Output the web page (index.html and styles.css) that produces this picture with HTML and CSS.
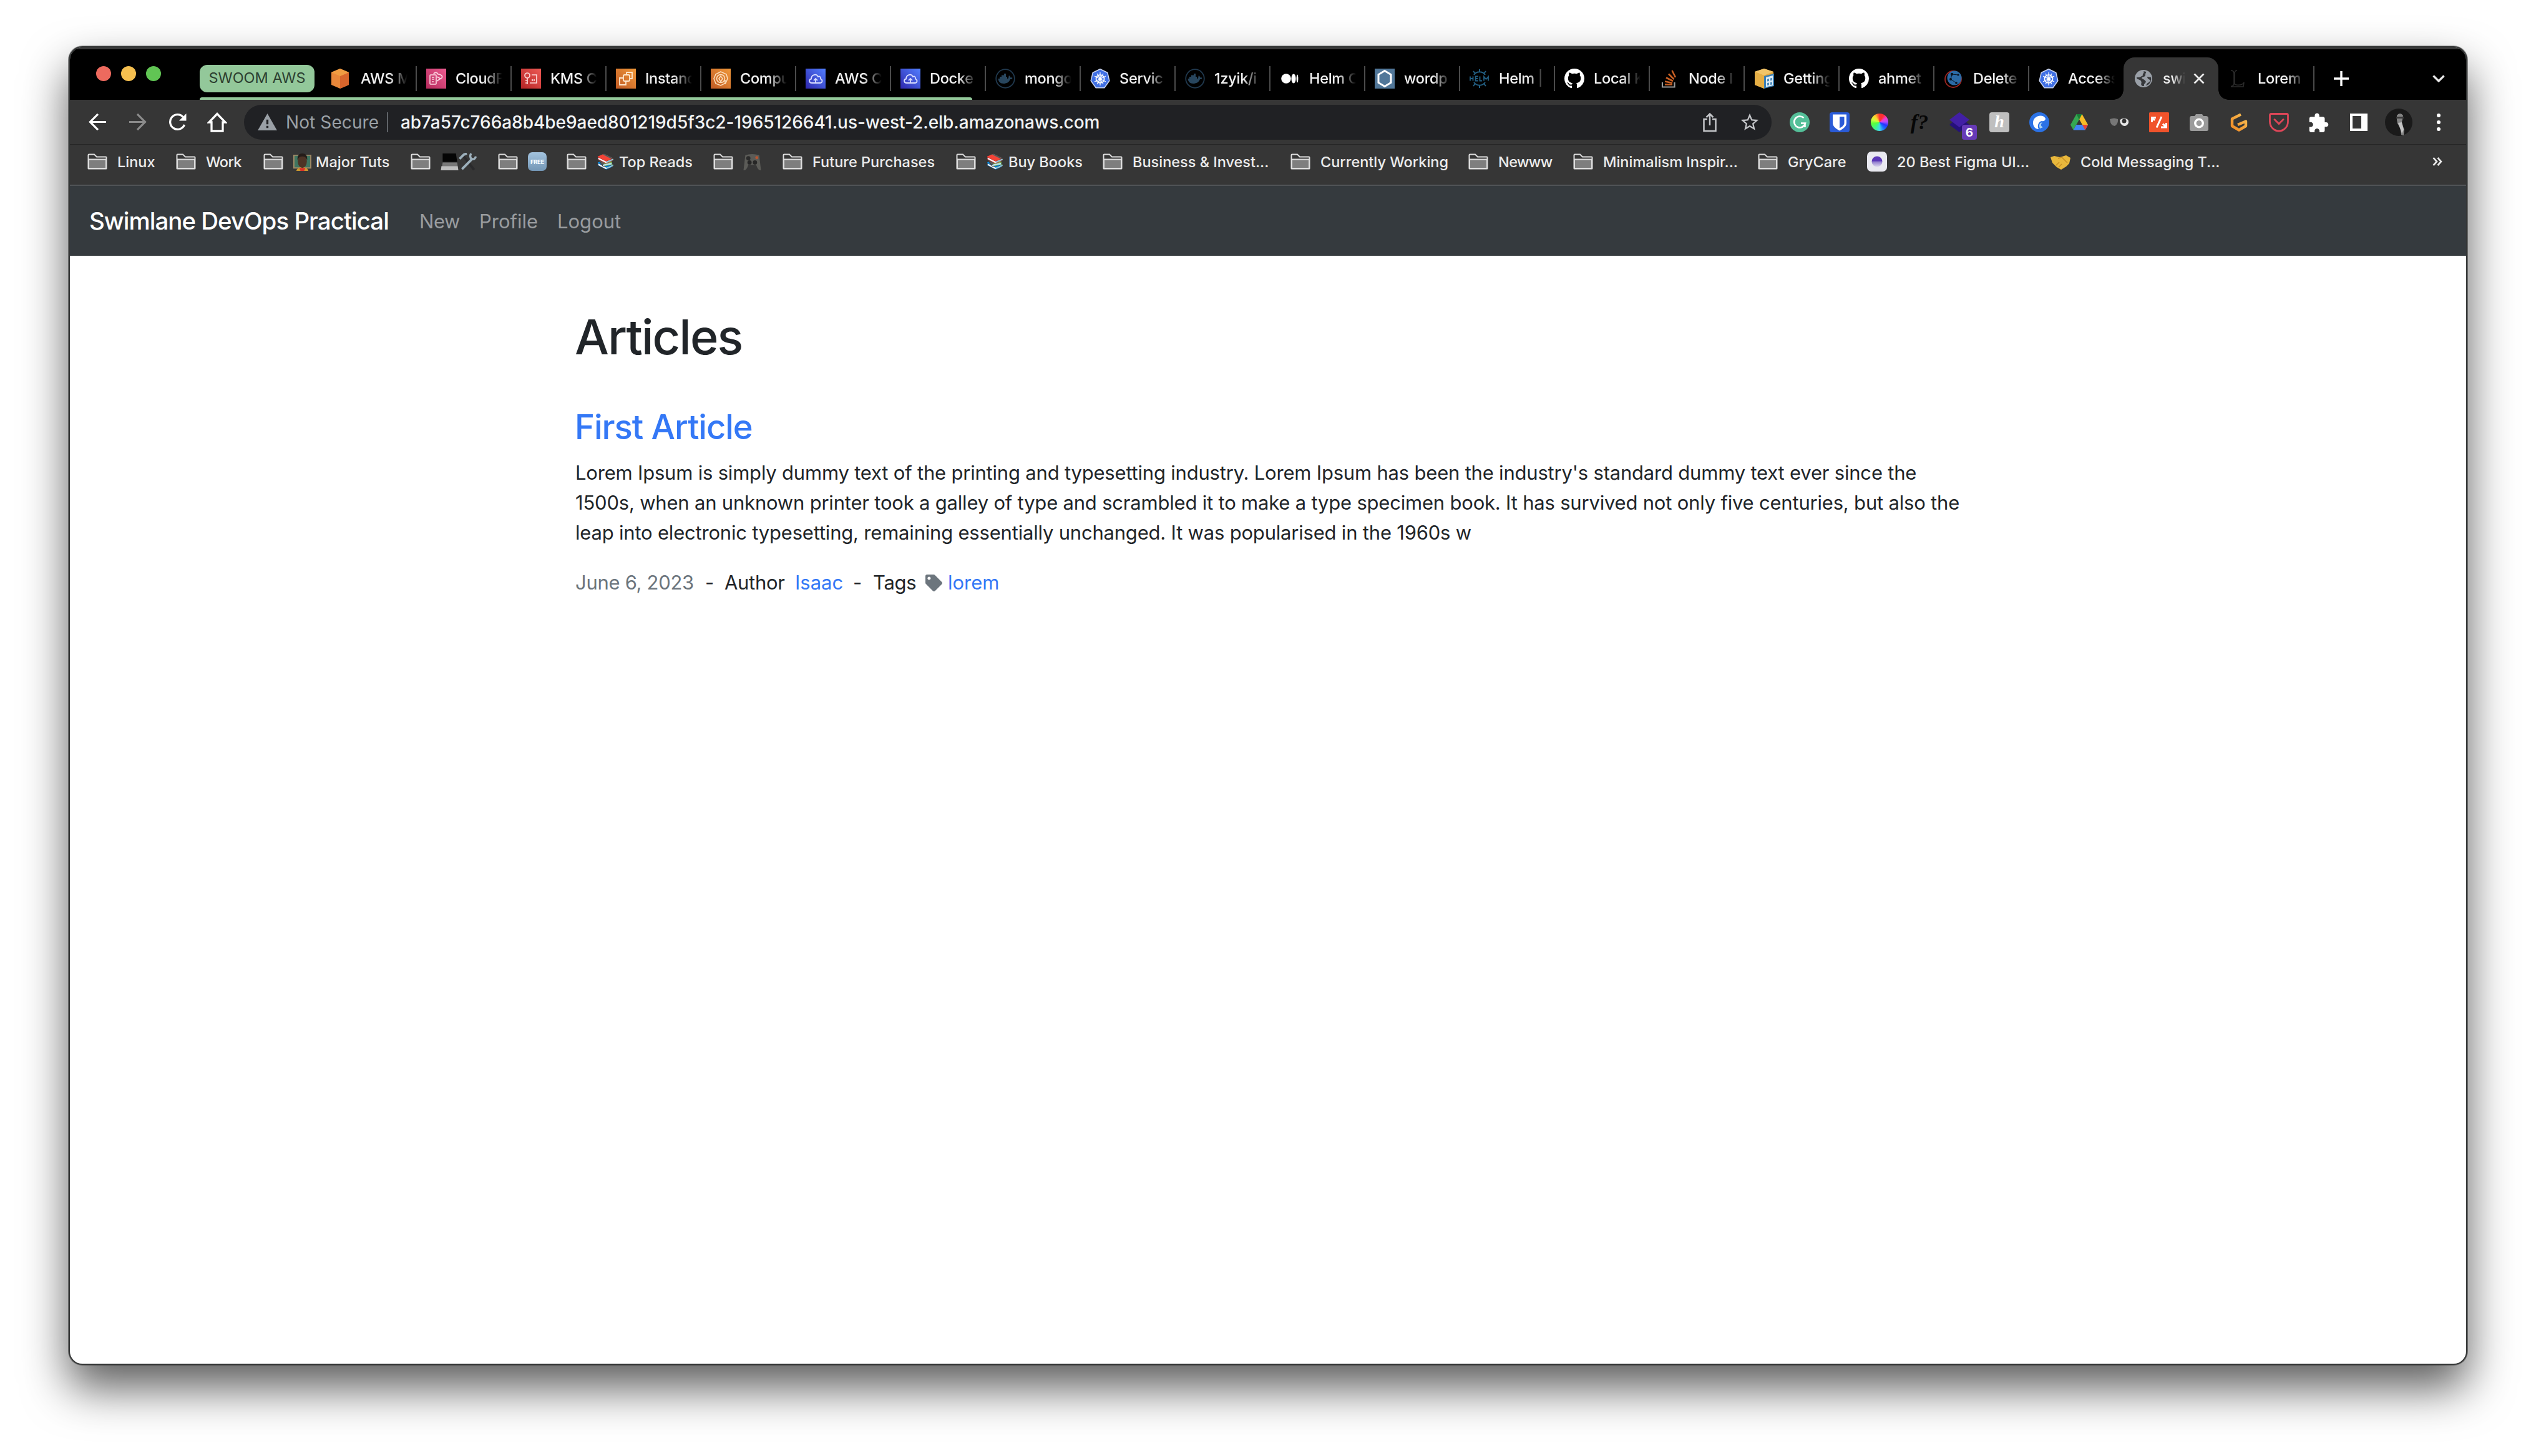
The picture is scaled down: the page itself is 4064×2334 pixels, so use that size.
FILE: index.html
```
<!DOCTYPE html>
<html lang="en">
<head>
<meta charset="utf-8">
<title>Articles</title>
<link rel="stylesheet" href="styles.css">
</head>
<body>
<svg class="sprite" aria-hidden="true">
  <defs>
    <linearGradient id="g-orange" x1="0" y1="1" x2="1" y2="0"><stop offset="0" stop-color="#c05a24"/><stop offset="1" stop-color="#f0983a"/></linearGradient>
    <linearGradient id="g-pink" x1="0" y1="1" x2="1" y2="0"><stop offset="0" stop-color="#b52a5c"/><stop offset="1" stop-color="#ec5b90"/></linearGradient>
    <linearGradient id="g-red" x1="0" y1="1" x2="1" y2="0"><stop offset="0" stop-color="#b32425"/><stop offset="1" stop-color="#ee5a55"/></linearGradient>
    <linearGradient id="g-blue" x1="0" y1="1" x2="1" y2="0"><stop offset="0" stop-color="#2e27ad"/><stop offset="1" stop-color="#527fff"/></linearGradient>
    <linearGradient id="g-figma" x1="0" y1="0" x2="0" y2="1"><stop offset=".45" stop-color="#5b38b8"/><stop offset=".5" stop-color="#8d78cd"/><stop offset="1" stop-color="#dcd8ee"/></linearGradient>
    <linearGradient id="g-g2" x1="0" y1="1" x2="1" y2="0"><stop offset="0" stop-color="#f08a24"/><stop offset="1" stop-color="#f7bf55"/></linearGradient>
  </defs>
  <symbol id="folder" viewBox="0 0 32 26"><path d="M1.500 24V2.500Q1.500 1.500 2.500 1.500H11L15 5.500H29.500Q30.500 5.500 30.500 6.500V24Q30.500 24.500 30 24.500H2Q1.500 24.500 1.500 24Z" fill="#363636" stroke="#dcdcdc" stroke-width="2"/><path d="M2 9.500H30V24H2Z" fill="#7e7e7e" stroke="#dcdcdc" stroke-width="2"/></symbol>
  <symbol id="awsbox" viewBox="0 0 32 32"><path d="M14 0 28 6V26L14 32 0 26V6Z" fill="#e8873a"/><path d="M14 12 28 6V26L14 32Z" fill="#d9662c"/><path d="M14 0 28 6 14 12 0 6Z" fill="#f09c42"/></symbol>
  <symbol id="cloudfront" viewBox="0 0 32 32"><path d="M0 0H32V32H0Z" fill="url(#g-pink)"/><g fill="none" stroke="#fbd3e0" stroke-width="1.600"><rect x="6" y="10" width="10" height="15" rx="1"/><path d="M9 14h4M9 17h4M9 21h3M12 9C13 5 18 6 19 9 24 9 27 12 25 15L20 18M17 13l6 3-6 4"/></g></symbol>
  <symbol id="kms" viewBox="0 0 32 32"><path d="M0 0H32V32H0Z" fill="url(#g-red)"/><g fill="none" stroke="#fbd6d6" stroke-width="1.700"><circle cx="10" cy="11" r="4"/><path d="M10 15V25M10 19H7M10 23H7M17 10h8V23H14M18 20v-3M21 20v-3"/></g></symbol>
  <symbol id="ec2" viewBox="0 0 32 32"><path d="M0 0H32V32H0Z" fill="url(#g-orange)"/><g fill="none" stroke="#fde6cb" stroke-width="1.800"><rect x="12" y="10" width="10" height="10" rx="2"/><path d="M17 10V6h9v10h-4M12 15H6v11h10v-6"/></g></symbol>
  <symbol id="compute" viewBox="0 0 32 32"><path d="M0 0H32V32H0Z" fill="url(#g-orange)"/><g fill="none" stroke="#fbdcb9" stroke-width="1.600"><path d="M16 5 25 9 27 16 24 23 16 27 8 24 5 16 8 9Z"/><circle cx="16" cy="16" r="6.500"/><path d="M16 12l-3 4 3 5 3-5zM23 18v7"/></g></symbol>
  <symbol id="awscloud" viewBox="0 0 32 32"><path d="M0 0H32V32H0Z" fill="url(#g-blue)"/><g fill="none" stroke="#d7dcff" stroke-width="1.800"><path d="M10 23C5 23 5 17 9 16.500 9 10 17 7 20 13 23 11.500 24.500 14 24 16.500 28 18 27 23 23 23Z"/><path d="M16 23V16M13 19l3-3 3 3"/></g></symbol>
  <symbol id="docker" viewBox="0 0 32 32"><circle cx="16" cy="16" r="14.800" fill="none" stroke="#20394e" stroke-width="1.800"/><path d="M4.500 16H20.500C22 14 21 12 22 11 24 12 24 14 24.500 14.500 26 14 27.500 15 27.500 15 27 17 25 17 24 17 22 22 18 24 13 24 8 24 5 21 4.500 16ZM7 13h12v3H7ZM10 10.500h7v3h-7ZM14 8h3v3h-3Z" fill="#28465e"/></symbol>
  <symbol id="k8s" viewBox="0 0 32 32"><path d="M16 .8 27.800 6.500 30.800 19.500 22.800 30.800H9.200L1.200 19.500 4.200 6.500Z" fill="#3f6fe4" stroke="#c8d3ee" stroke-width="1.500" stroke-linejoin="round"/><g fill="none" stroke="#fff" stroke-width="1.700"><circle cx="16" cy="16.500" r="6.500"/><path d="M16 6V27M7 12 25 21M25 12 7 21M11 25 21 8M21 25 11 8" stroke-width="1.200"/></g><circle cx="16" cy="16.500" r="2" fill="#fff"/></symbol>
  <symbol id="medium" viewBox="0 0 32 32"><circle cx="10" cy="16" r="7.800" fill="#fff"/><ellipse cx="22" cy="16" rx="3.600" ry="7.400" fill="#fff"/><ellipse cx="28" cy="16" rx="1.400" ry="6.500" fill="#fff"/></symbol>
  <symbol id="hexa" viewBox="0 0 32 32"><path d="M0 0H32V32H0Z" fill="#517799"/><path d="M16 3.500 26 9.500V22.500L16 28.500 6 22.500V9.500Z" fill="none" stroke="#fff" stroke-width="3"/></symbol>
  <symbol id="helm" viewBox="0 0 32 32"><g fill="none" stroke="#225f83" stroke-width="2"><path d="M7 10A11 11 0 0 1 25 10M7 22A11 11 0 0 0 25 22M16 1v5M6 4l3 4M26 4l-3 4M16 31v-5M6 28l3-4M26 28l-3-4"/><path d="M1 12.500v7M1 16H5M5.500 12.500v7M14 12.500H9.500v7H14M9.500 16H13M16.500 12.500v7H20M23 19.500V13l3.500 4L30 13v6.500" stroke-width="1.800"/></g></symbol>
  <symbol id="github" viewBox="0 0 16 16"><path fill="#fff" d="M8 0C3.580 0 0 3.580 0 8c0 3.540 2.290 6.530 5.470 7.590.4.070.55-.17.55-.38 0-.19-.01-.82-.01-1.490-2.010.37-2.530-.49-2.690-.94-.09-.23-.48-.94-.82-1.130-.28-.15-.68-.52-.01-.53.63-.01 1.080.58 1.230.82.72 1.210 1.870.87 2.330.66.07-.52.28-.87.51-1.070-1.780-.2-3.640-.89-3.640-3.950 0-.87.31-1.590.82-2.150-.08-.2-.36-1.020.08-2.120 0 0 .67-.21 2.200.82.64-.18 1.320-.27 2-.27s1.360.09 2 .27c1.530-1.040 2.200-.82 2.200-.82.44 1.100.16 1.920.08 2.120.51.56.82 1.270.82 2.150 0 3.070-1.870 3.750-3.650 3.950.29.25.54.73.54 1.480 0 1.070-.01 1.930-.01 2.200 0 .21.15.46.55.38A8.010 8.010 0 0 0 16 8c0-4.420-3.580-8-8-8z"/></symbol>
  <symbol id="stack" viewBox="0 0 32 32"><path d="M5 22V29.500H24.500V22" fill="none" stroke="#9a9a9a" stroke-width="2.200"/><path d="M9 25.500H21M9 20.500 21 23M11 14.500 22 20M15 8.500 23.500 17M20.500 3 26 14" stroke="#c85f23" stroke-width="2.600" fill="none"/></symbol>
  <symbol id="getting" viewBox="0 0 32 32"><path d="M16 0 31 5V25L16 32 1 26V5Z" fill="#e2a63b"/><path d="M16 0 31 5 16 11 1 5Z" fill="#f2c468"/><path d="M16 11 1 5V26L16 32Z" fill="#e5ae45"/><path d="M16 12 32 8V28L16 32Z" fill="#3c7fb4"/><path d="M19 14 30 11V27L19 29.500Z" fill="#dcebf5"/><path d="M21 17l3-1v4l-3 .6zM26 15.500l3-.8v4l-3 .6zM21 23l3-.6v4l-3 .6zM26 22l3-.6v4l-3 .6z" fill="#4d8dbe"/></symbol>
  <symbol id="globe2" viewBox="0 0 32 32"><circle cx="15" cy="17" r="13" fill="none" stroke="#9c2622" stroke-width="1.800"/><circle cx="17" cy="15" r="11.500" fill="#2c6aa6"/><g fill="#081320"><circle cx="13" cy="9" r="2.200"/><circle cx="11" cy="17" r="2"/><circle cx="23" cy="10" r="1.600"/><circle cx="20" cy="23" r="1.800"/></g><path d="M13 9 11 17 20 23M13 9 23 10" fill="none" stroke="#081320" stroke-width="1"/></symbol>
  <symbol id="world" viewBox="0 0 32 32"><circle cx="16" cy="16" r="14" fill="#9aa0a8"/><path d="M16 4C18 7 14 8 15 11 12 12 11 14 8 14 6 14 5 13 5 15 6 18 11 17 12 20 14 23 11 24 13 27 14 28 15 28 17 28 16 24 19 24 20 21 18 17 14 17 13 15 15 12 19 14 19 10 19 7 21 6 20 5Z" fill="#36383b"/><path d="M22 13C22 17 26 17 27 19 25 23 22 22 20 27 26 26 29 20 28 14Z" fill="#36383b"/></symbol>
  <symbol id="lorem" viewBox="0 0 32 32"><path d="M4 3C8 3 9 5 9 8V24C9 27 7 28 4 28.500M14 3C11 3 10 5 10 8V24C10 27 22 28 25 22L24 29H4" fill="none" stroke="#2b2b2b" stroke-width="1.600"/></symbol>
</svg>

<div class="window">
  <div class="tabstrip">
    <div class="lights"><i class="red"></i><i class="yellow"></i><i class="green"></i></div>
    <div class="group">
      <span class="pill">SWOOM AWS</span>
      <div class="tab first"><svg><use href="#awsbox"/></svg><span>AWS M</span></div>
      <div class="tab"><svg><use href="#cloudfront"/></svg><span>CloudF</span></div>
      <div class="tab"><svg><use href="#kms"/></svg><span>KMS C</span></div>
      <div class="tab"><svg><use href="#ec2"/></svg><span>Instanc</span></div>
      <div class="tab"><svg><use href="#compute"/></svg><span>Compu</span></div>
      <div class="tab"><svg><use href="#awscloud"/></svg><span>AWS C</span></div>
      <div class="tab"><svg><use href="#awscloud"/></svg><span>Docke</span></div>
    </div>
    <div class="tab"><svg><use href="#docker"/></svg><span>mongo</span></div>
    <div class="tab"><svg><use href="#k8s"/></svg><span>Servic</span></div>
    <div class="tab"><svg><use href="#docker"/></svg><span>1zyik/i</span></div>
    <div class="tab"><svg><use href="#medium"/></svg><span>Helm C</span></div>
    <div class="tab"><svg><use href="#hexa"/></svg><span>wordp</span></div>
    <div class="tab"><svg><use href="#helm"/></svg><span>Helm |</span></div>
    <div class="tab"><svg><use href="#github"/></svg><span>Local K</span></div>
    <div class="tab"><svg><use href="#stack"/></svg><span>Node I</span></div>
    <div class="tab"><svg><use href="#getting"/></svg><span>Getting</span></div>
    <div class="tab"><svg><use href="#github"/></svg><span>ahmet</span></div>
    <div class="tab"><svg><use href="#globe2"/></svg><span>Delete</span></div>
    <div class="tab"><svg><use href="#k8s"/></svg><span>Access</span></div>
    <div class="tab active"><svg><use href="#world"/></svg><span>swi</span>
      <svg class="close" viewBox="0 0 18 18"><path d="M1.500 1.500 16.500 16.500M16.500 1.500 1.500 16.500" stroke="#e8e8e8" stroke-width="2.800"/></svg></div>
    <div class="tab first"><svg><use href="#lorem"/></svg><span>Lorem</span></div>
    <div class="newtab"><svg viewBox="0 0 24 24"><path d="M12 0V24M0 12H24" stroke="#fff" stroke-width="3.400"/></svg></div>
    <svg class="chev" viewBox="0 0 20 12"><path d="M1.500 1.500 10 10 18.500 1.500" fill="none" stroke="#e8e8e8" stroke-width="3.200"/></svg>
  </div>

  <div class="toolbar">
    <div class="btn"><svg viewBox="0 0 30 30"><path d="M29 15H3M15.500 2 2.500 15 15.500 28" fill="none" stroke="#fff" stroke-width="3.300"/></svg></div>
    <div class="btn"><svg viewBox="0 0 30 30"><path d="M1 15H27M14.500 2 27.500 15 14.500 28" fill="none" stroke="#8b8b8b" stroke-width="3.300"/></svg></div>
    <div class="btn"><svg viewBox="0 0 30 30"><path d="M26.500 19.500A12.300 12.300 0 1 1 24 6.500" fill="none" stroke="#fff" stroke-width="3.400"/><path d="M29.500 1V13H17.500Z" fill="#fff"/></svg></div>
    <div class="btn"><svg class="home" viewBox="0 0 32 32"><path d="M16 2.500 3 16H7V30H25V16H29Z" fill="none" stroke="#fff" stroke-width="3.300"/></svg></div>
    <div class="omnibox">
      <svg class="warn" viewBox="0 0 32 28"><path d="M16 0 32 28H0Z" fill="#9aa0a6"/><path d="M14.300 10h3.400v8h-3.400zM14.300 20.500h3.400v3.500h-3.400z" fill="#202124"/></svg>
      <span class="notsecure">Not Secure</span>
      <i class="divider"></i>
      <span class="url">ab7a57c766a8b4be9aed801219d5f3c2-1965126641.us-west-2.elb.amazonaws.com</span>
      <svg class="share" viewBox="0 0 24 32"><path d="M8 11H2.500V30H21.500V11H16M12 21V3M6.500 8 12 2.500 17.500 8" fill="none" stroke="#c3c5c8" stroke-width="2.500"/></svg>
      <svg class="star" viewBox="0 0 24 24"><path fill="#c3c5c8" d="M22 9.240l-7.190-.62L12 2 9.190 8.630 2 9.240l5.460 4.730L5.820 21 12 17.270 18.180 21l-1.630-7.030L22 9.240zM12 15.400l-3.760 2.270 1-4.280-3.320-2.880 4.380-.38L12 6.100l1.710 4.040 4.380.38-3.320 2.880 1 4.280L12 15.400z"/></svg>
    </div>
    <div class="btn"><svg viewBox="0 0 32 32"><circle cx="16" cy="16" r="16" fill="#54bf98"/><path d="M22.500 9A9 9 0 1 0 25 17.500H18M24.500 16.500V24" fill="none" stroke="#fff" stroke-width="2.600"/></svg></div>
    <div class="btn"><svg viewBox="0 0 32 32"><rect width="32" height="32" rx="4" fill="#2a5bd7"/><path d="M5 3.500H27V17C27 23 21 27 16 29.500 11 27 5 23 5 17Z" fill="#fff"/><path d="M16 7H23.500V17C23.500 21 19 24 16 25.500Z" fill="#2a5bd7"/></svg></div>
    <div class="btn"><div class="wheel"></div></div>
    <div class="btn"><span class="fx">f?</span></div>
    <div class="btn badge-wrap"><svg viewBox="0 0 32 32"><path d="M16 7 32 20 16 32 0 20Z" fill="#25107a"/><path d="M16 0 32 12 16 24 0 12Z" fill="#421fa5"/></svg><b class="badge">6</b></div>
    <div class="btn"><div class="honey">h</div></div>
    <div class="btn"><svg viewBox="0 0 32 32"><circle cx="16" cy="16" r="16" fill="#2b72e6"/><path d="M26 10C22 2 6 5 6 17 6 23 10 27 15 27 12 21 15 15 20 14 23 15 26 13 26 10Z" fill="#fff"/><path d="M17 26C14 20 18 15 21 17 17 19 19 23 22 24Z" fill="#a9d3f5"/></svg></div>
    <div class="btn"><svg class="s28" viewBox="0 0 28 26"><path d="M9.500 0H18.500L28 17H19Z" fill="#f6bd27"/><path d="M9.500 0 14 8.500 4.700 25.500 0 17Z" fill="#34a853"/><path d="M9.300 17H28L23.500 25.500H4.700Z" fill="#4285f4"/><path d="M19 17H28L23.500 25.500Z" fill="#ea4335"/><path d="M9.500 0H18.500L14 8.500Z" fill="#188038"/></svg></div>
    <div class="btn"><svg viewBox="0 0 32 32"><path d="M1 11Q8 8 14 11 15 18 9 22 2 22 1 11Z" fill="#777"/><path d="M17 13Q20 9 26 10 32 11 31 17 29 22 24 22 18 21 17 13Z" fill="#e6e6e6"/><circle cx="24" cy="14" r="3.500" fill="#333"/></svg></div>
    <div class="btn"><svg viewBox="0 0 32 32"><rect width="32" height="32" rx="1.500" fill="#f0532b"/><path d="M12 24.500 20 7M4.500 15.500V8.500H11M5 9 9 13M27.500 17V24H19M27 23.500 22 18.500" fill="none" stroke="#fff" stroke-width="3"/></svg></div>
    <div class="btn"><svg viewBox="0 0 32 32"><path d="M1 10Q1 6 4 6H9L11 3H21L23 6H27Q31 6 31 10V27Q31 30 28 30H4Q1 30 1 27Z" fill="#9b9b9b"/><circle cx="16" cy="17.500" r="6.200" fill="#9b9b9b" stroke="#fff" stroke-width="3.500"/></svg></div>
    <div class="btn"><svg viewBox="0 0 32 32"><path d="M19 3.500 5 10.500V22L16 28.500 27 22V14.500L14 20" fill="none" stroke="url(#g-g2)" stroke-width="4.400" stroke-linejoin="round"/></svg></div>
    <div class="btn"><svg viewBox="0 0 32 32"><path d="M1.500 4.500Q1.500 2.500 3.500 2.500H28.500Q30.500 2.500 30.500 4.500V15C30.500 24 23 30 16 30 9 30 1.500 24 1.500 15ZM9 11.500 16 18.500 23 11.500" fill="none" stroke="#dd4658" stroke-width="2.800" stroke-linecap="round"/></svg></div>
    <div class="btn"><svg viewBox="1.500 0 22 22"><path fill="#fff" d="M20.500 11H19V7c0-1.100-.9-2-2-2h-4V3.500C13 2.120 11.880 1 10.500 1S8 2.120 8 3.500V5H4c-1.100 0-1.990.9-1.990 2v3.800H3.500c1.490 0 2.700 1.210 2.700 2.700s-1.210 2.700-2.700 2.700H2V20c0 1.100.9 2 2 2h3.800v-1.500c0-1.490 1.210-2.700 2.700-2.700 1.490 0 2.700 1.210 2.700 2.700V22H17c1.100 0 2-.9 2-2v-4h1.500c1.380 0 2.500-1.120 2.500-2.500S21.880 11 20.500 11z"/></svg></div>
    <div class="btn"><svg class="s28" viewBox="0 0 28 28"><path d="M0 0H28V28H0ZM4 4V24H18V4Z" fill="#fff" fill-rule="evenodd"/></svg></div>
    <div class="btn"><svg class="avatar" viewBox="0 0 44 44"><circle cx="22" cy="22" r="22" fill="#1a1a1a"/><path d="M19 11Q24 5 29 11L28 18Q26 23 28 26L31 34 30 43 26 42 25 32 20 24 19 18Z" fill="#858585"/><path d="M18 13H30V16H18Z" fill="#3a3a3a"/><path d="M21 23 27 22 30 34 27 40Z" fill="#c4c4c4"/></svg></div>
    <div class="btn"><svg viewBox="0 0 32 32"><g fill="#fff"><circle cx="16" cy="5" r="3"/><circle cx="16" cy="16" r="3"/><circle cx="16" cy="27" r="3"/></g></svg></div>
  </div>

  <div class="bookmarks">
    <div class="bm"><svg><use href="#folder"/></svg><span>Linux</span></div>
    <div class="bm"><svg><use href="#folder"/></svg><span class="tight">Work</span></div>
    <div class="bm"><svg><use href="#folder"/></svg><svg class="pic wide" viewBox="0 0 30 30"><path d="M1 4H29V25H1Z" fill="#3f7560" stroke="#a08a66" stroke-width="2"/><path d="M5 30Q6 24 15 24 24 24 25 30Z" fill="#c9962f"/><path d="M10 25H20L18 30H12Z" fill="#d8322a"/><ellipse cx="15" cy="14" rx="7.500" ry="11" fill="#4d3426"/><path d="M7 12Q6 1 15 1 24 1 23 12 21 6 15 6 9 6 7 12Z" fill="#241c19"/></svg><span>Major Tuts</span></div>
    <div class="bm"><svg><use href="#folder"/></svg><svg class="pic" viewBox="0 0 29 30"><path d="M3 1H25L27 15H3Z" fill="#050505"/><path d="M3 16H27L28 22H2Z" fill="#777"/><path d="M1 22H28L29 29H0Z" fill="#bdbdbd"/></svg><svg class="pic" viewBox="0 0 29 30"><path d="M8 6 25 28" stroke="#2a2a2c" stroke-width="4"/><path d="M1 10 8 3 13 1M22 10 5 27" fill="none" stroke="#9db0bc" stroke-width="4"/><path d="M20 1Q17 7 21 10 26 12 28 6" fill="none" stroke="#9db0bc" stroke-width="3.500"/></svg></div>
    <div class="bm"><svg><use href="#folder"/></svg><span class="free">FREE</span></div>
    <div class="bm"><svg><use href="#folder"/></svg><span class="emoji wide">📚</span><span>Top Reads</span></div>
    <div class="bm"><svg><use href="#folder"/></svg><svg class="pic" viewBox="0 0 29 30"><path d="M3 4Q14 0 26 4L29 29Q24 30 21 20H8Q5 30 0 29Z" fill="#5b5b57"/><circle cx="8" cy="9" r="3.500" fill="#2b2b2b"/><circle cx="10" cy="16" r="3.500" fill="#262626"/><circle cx="19" cy="16" r="3.500" fill="#262626"/><circle cx="22" cy="8" r="2.500" fill="#b8552f"/></svg></div>
    <div class="bm"><svg><use href="#folder"/></svg><span>Future Purchases</span></div>
    <div class="bm"><svg><use href="#folder"/></svg><span class="emoji wide">📚</span><span>Buy Books</span></div>
    <div class="bm"><svg><use href="#folder"/></svg><span>Business &amp; Invest...</span></div>
    <div class="bm"><svg><use href="#folder"/></svg><span>Currently Working</span></div>
    <div class="bm"><svg><use href="#folder"/></svg><span class="tight">Newww</span></div>
    <div class="bm"><svg><use href="#folder"/></svg><span>Minimalism Inspir...</span></div>
    <div class="bm"><svg><use href="#folder"/></svg><span>GryCare</span></div>
    <div class="bm"><svg class="fav" viewBox="0 0 32 32"><rect width="32" height="32" rx="7" fill="#e9e9f0"/><circle cx="16" cy="16" r="8.500" fill="url(#g-figma)"/></svg><span>20 Best Figma UI...</span></div>
    <div class="bm"><svg class="fav" viewBox="0 0 32 32"><path d="M0 9 6 7 15 9 25 6 32 10 30 19 25 24 17 29 10 25 3 18Z" fill="#e9b83c"/><path d="M12 11 18 9 27 18M9 22 14 17M13 25 18 20" fill="none" stroke="#c98f24" stroke-width="1.500"/></svg><span>Cold Messaging T...</span></div>
    <svg class="more" viewBox="0 0 16 14"><path d="M1.500 1 7 7 1.500 13M8.500 1 14 7 8.500 13" fill="none" stroke="#e8e8e8" stroke-width="2.600"/></svg>
  </div>

  <nav class="navbar">
    <a class="brand">Swimlane DevOps Practical</a>
    <a class="n-new">New</a><a class="n-profile">Profile</a><a>Logout</a>
  </nav>

  <main class="content">
    <h1>Articles</h1>
    <h2>First Article</h2>
    <p>Lorem Ipsum is simply dummy text of the printing and typesetting industry. Lorem Ipsum has been the industry's standard dummy text ever since the<br>1500s, when an unknown printer took a galley of type and scrambled it to make a type specimen book. It has survived not only five centuries, but also the<br>leap into electronic typesetting, remaining essentially unchanged. It was popularised in the 1960s w</p>
    <div class="meta">
      <span class="muted">June 6, 2023</span><span>-</span><span>Author</span><a>Isaac</a><span>-</span><span>Tags</span>
      <svg viewBox="0 0 512 512"><path fill="#6c757d" d="M0 252.118V48C0 21.490 21.490 0 48 0h204.118a48 48 0 0 1 33.941 14.059l211.883 211.883c18.745 18.745 18.745 49.137 0 67.882L293.823 497.941c-18.745 18.745-49.137 18.745-67.882 0L14.059 286.059A48 48 0 0 1 0 252.118zM112 64c-26.510 0-48 21.490-48 48s21.490 48 48 48 48-21.490 48-48-21.490-48-48-48z"/></svg>
      <a>lorem</a>
    </div>
  </main>
</div>
</body>
</html>
```
FILE: styles.css
```
* { box-sizing: border-box; }
html, body { margin: 0; height: 100%; }
body {
  padding: 74px 110px 146px;
  background: #fff;
  font-family: Inter, "Liberation Sans", sans-serif;
  overflow: hidden;
}
.sprite { position: absolute; width: 0; height: 0; }

.window {
  display: flex;
  flex-direction: column;
  height: 2114px;
  border: 2px solid #343636;
  border-radius: 22px;
  background: #fff;
  overflow: hidden;
  box-shadow: 0 0 0 1px rgba(0, 0, 0, .35), 0 37px 72px rgba(0, 0, 0, .64);
}

/* Tab strip */
.tabstrip {
  display: flex;
  align-items: center;
  flex: none;
  height: 84px;
  padding: 13px 34px 0 42px;
  border-top: 3px solid #3a3a3a;
  background: #000;
  color: #f1f1f1;
  font-size: 23.5px;
  font-weight: 500;
}
.lights { display: flex; gap: 16px; width: 166px; height: 24px; margin-top: -16px; }
.lights i { width: 24px; height: 24px; border-radius: 50%; }
.red { background: #ed6a5e; }
.yellow { background: #f5bf4f; }
.green { background: #61c554; }
.group { position: relative; display: flex; align-items: center; height: 68px; }
.group::after {
  content: "";
  position: absolute;
  left: 0;
  right: 21px;
  bottom: 0;
  height: 4px;
  border-radius: 4px 4px 0 0;
  background: #93c89a;
}
.pill {
  width: 184px;
  height: 44px;
  margin-right: 11px;
  border-radius: 12px;
  background: #93c89a;
  color: #2c3f31;
  font-weight: 400;
  line-height: 42px;
  text-align: center;
}
.tab {
  position: relative;
  display: flex;
  align-items: center;
  flex: none;
  width: 152px;
  height: 68px;
  padding-left: 15px;
}
.tab::before {
  content: "";
  width: 2px;
  height: 40px;
  margin: 0 15px 0 -16px;
  background: #4b4b4b;
}
.tab.first::before, .tab.active::before { background: transparent; }
.tab svg { width: 32px; height: 32px; flex: none; }
.tab span {
  width: 75px;
  margin: -2px 0 0 15px;
  overflow: hidden;
  white-space: nowrap;
  letter-spacing: -.3px;
  -webkit-mask-image: linear-gradient(90deg, #000 46px, transparent 75px);
  mask-image: linear-gradient(90deg, #000 46px, transparent 75px);
}
.tab.active {
  border-radius: 18px 18px 0 0;
  background: #363636;
}
.tab.active::after {
  content: "";
  position: absolute;
  left: -16px;
  right: -16px;
  bottom: 0;
  height: 16px;
  background:
    radial-gradient(circle at 0 0, transparent 15.500px, #363636 16px) left / 16px 16px no-repeat,
    radial-gradient(circle at 100% 0, transparent 15.500px, #363636 16px) right / 16px 16px no-repeat;
}
.tab.active span {
  width: 36px;
  -webkit-mask-image: linear-gradient(90deg, #000 16px, transparent 36px);
  mask-image: linear-gradient(90deg, #000 16px, transparent 36px);
}
.tab.active .close { width: 18px; height: 18px; margin-left: 13px; }
.newtab { display: flex; align-items: center; flex: 1; height: 40px; padding-left: 31px; border-left: 2px solid #4b4b4b; }
.newtab svg { width: 24px; height: 24px; }
.chev { width: 20px; height: 12px; }

/* Toolbar */
.toolbar {
  display: flex;
  align-items: center;
  flex: none;
  height: 72px;
  padding: 0 12px;
  border-bottom: 1px solid #252525;
  background: #363636;
}
.btn { display: flex; align-items: center; justify-content: center; flex: none; width: 64px; height: 64px; }
.btn svg { width: 32px; height: 32px; }
.btn .s28 { width: 28px; height: 28px; }
.btn .avatar { width: 44px; height: 44px; }
.btn:nth-child(-n+3) svg { width: 29px; height: 29px; }
.omnibox {
  display: flex;
  align-items: center;
  flex: 1;
  height: 56px;
  margin: 0 13px 0 11px;
  padding: 0 20px 0 22px;
  border-radius: 28px;
  background: #202124;
  font-size: 28px;
  white-space: nowrap;
}
.warn { width: 31px; height: 27px; }
.notsecure { width: 162px; margin-left: 14px; color: #9aa0a6; letter-spacing: .1px; }
.divider { width: 2px; height: 32px; background: #5f6368; }
.url { flex: 1; margin-left: 20px; color: #f1f3f4; font-weight: 500; letter-spacing: -.045px; }
.share { width: 24px; height: 32px; margin-right: 35px; }
.star { width: 34px; height: 34px; margin-right: -2px; }
.wheel {
  width: 28px;
  height: 28px;
  border-radius: 50%;
  background: conic-gradient(#ff3030 0 8%, #f03cd0 16%, #b04cff 24%, #2334ff 32%, #1a6dff 40%, #40d8e8 50%, #3df58a 60%, #5bff3a 72%, #c8ff40 80%, #ffd12e 90%, #ff3030);
}
.fx { color: #060606; font: italic bold 34px "Liberation Serif", serif; }
.badge-wrap { position: relative; }
.badge {
  position: absolute;
  right: 4px;
  bottom: 4px;
  width: 24px;
  height: 24px;
  border-radius: 4px;
  background: #673ab7;
  color: #fff;
  font-size: 19px;
  line-height: 26px;
  text-align: center;
}
.honey {
  width: 32px;
  height: 32px;
  border-radius: 4px;
  background: #bfbfbf;
  color: #fff;
  font: italic bold 28px/30px "Liberation Serif", serif;
  text-align: center;
}

/* Bookmarks bar */
.bookmarks {
  display: grid;
  grid-template-columns: 142px 140px 236px 140px 110px 235px 111px 278px 235px 301px 285px 168px 296px 175px 294px 1fr 16px;
  align-items: center;
  flex: none;
  height: 66px;
  padding: 0 38px 10px 28px;
  border-bottom: 2px solid #505356;
  background: #363636;
  color: #ebebeb;
  font-size: 23.5px;
  font-weight: 500;
  white-space: nowrap;
}
.bm { display: flex; align-items: center; height: 40px; }
.bm svg { width: 32px; height: 26px; margin-right: 16px; }
.bm .fav { height: 32px; }
.bm .pic { width: 29px; height: 29px; margin-right: 0; }
.bm .pic.wide { margin-right: 7px; }
.tight { letter-spacing: -.6px; }
.emoji { width: 29px; font-family: "Noto Color Emoji", sans-serif; font-size: 23.5px; line-height: 40px; }
.emoji.wide { width: 36px; }
.free {
  width: 30px;
  height: 30px;
  border-radius: 7px;
  background: linear-gradient(#a3c3de, #7396b5);
  color: #fff;
  font-size: 9.5px;
  font-weight: 700;
  line-height: 31px;
  text-align: center;
  letter-spacing: -.4px;
}
.more { width: 16px; height: 14px; }

/* Site navigation */
.navbar {
  display: flex;
  align-items: center;
  flex: none;
  height: 112px;
  padding-left: 31px;
  background: #353a3e;
  color: #999c9f;
  font-size: 31px;
  white-space: nowrap;
}
.brand { width: 529px; color: #fff; font-size: 38.5px; font-weight: 500; letter-spacing: -1px; }
.n-new { width: 96px; letter-spacing: -.4px; }
.n-profile { width: 125px; }

/* Article list */
.content { padding: 82px 0 0 810px; color: #212529; font-size: 31px; line-height: 48px; white-space: nowrap; }
h1, h2, p { margin: 0; }
h1 { margin-left: -1px; font-size: 77.5px; font-weight: 500; line-height: 96px; letter-spacing: -1.9px; }
h2 { margin: 63px 0 0 -1px; color: #3478f6; font-size: 54.3px; font-weight: 500; line-height: 67px; letter-spacing: -1.05px; }
p { margin: 16px 0 32px; letter-spacing: -.2px; }
.meta {
  display: grid;
  grid-template-columns: 208px 31px 113px 93px 32px 84px 36px auto;
  align-items: center;
  letter-spacing: -.3px;
}
.meta svg { width: 27px; height: 27px; }
.meta a { color: #3478f6; letter-spacing: 0; }
.muted { color: #6c757d; }
```
